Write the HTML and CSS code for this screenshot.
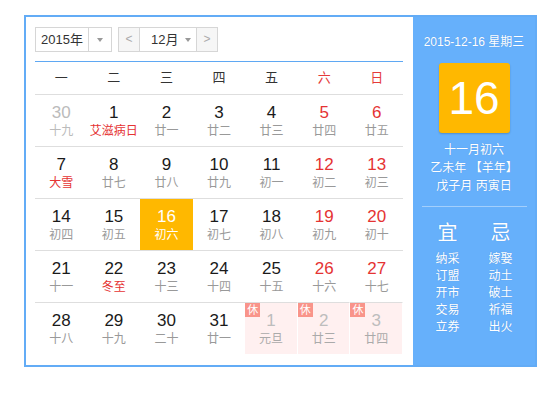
FILE: index.html
```html
<!DOCTYPE html>
<html lang="zh-CN">
<head>
<meta charset="utf-8">
<title>万年历</title>
<link rel="stylesheet" href="styles.css">
</head>
<body>
<div class="cal">
  <div class="main">
    <div class="toolbar">
      <div class="sel year">
        <span class="sel-text">2015年</span>
        <span class="sel-arrow"><i class="tri"></i></span>
      </div>
      <div class="sel month-group">
        <span class="nav">&lt;</span>
        <span class="sel-text month">12月<i class="tri"></i></span>
        <span class="nav">&gt;</span>
      </div>
    </div>
    <div class="week">
      <span>一</span><span>二</span><span>三</span><span>四</span><span>五</span><span class="red">六</span><span class="red">日</span>
    </div>
    <div class="days">
      <div class="d other"><b>30</b><em>十九</em></div>
      <div class="d fest"><b>1</b><em>艾滋病日</em></div>
      <div class="d"><b>2</b><em>廿一</em></div>
      <div class="d"><b>3</b><em>廿二</em></div>
      <div class="d"><b>4</b><em>廿三</em></div>
      <div class="d wk"><b>5</b><em>廿四</em></div>
      <div class="d wk"><b>6</b><em>廿五</em></div>

      <div class="d fest"><b>7</b><em>大雪</em></div>
      <div class="d"><b>8</b><em>廿七</em></div>
      <div class="d"><b>9</b><em>廿八</em></div>
      <div class="d"><b>10</b><em>廿九</em></div>
      <div class="d"><b>11</b><em>初一</em></div>
      <div class="d wk"><b>12</b><em>初二</em></div>
      <div class="d wk"><b>13</b><em>初三</em></div>

      <div class="d"><b>14</b><em>初四</em></div>
      <div class="d"><b>15</b><em>初五</em></div>
      <div class="d today"><b>16</b><em>初六</em></div>
      <div class="d"><b>17</b><em>初七</em></div>
      <div class="d"><b>18</b><em>初八</em></div>
      <div class="d wk"><b>19</b><em>初九</em></div>
      <div class="d wk"><b>20</b><em>初十</em></div>

      <div class="d"><b>21</b><em>十一</em></div>
      <div class="d fest"><b>22</b><em>冬至</em></div>
      <div class="d"><b>23</b><em>十三</em></div>
      <div class="d"><b>24</b><em>十四</em></div>
      <div class="d"><b>25</b><em>十五</em></div>
      <div class="d wk"><b>26</b><em>十六</em></div>
      <div class="d wk"><b>27</b><em>十七</em></div>

      <div class="d"><b>28</b><em>十八</em></div>
      <div class="d"><b>29</b><em>十九</em></div>
      <div class="d"><b>30</b><em>二十</em></div>
      <div class="d"><b>31</b><em>廿一</em></div>
      <div class="d hol"><span class="badge">休</span><b>1</b><em>元旦</em></div>
      <div class="d hol"><span class="badge">休</span><b>2</b><em>廿三</em></div>
      <div class="d hol"><span class="badge">休</span><b>3</b><em>廿四</em></div>
    </div>
  </div>
  <div class="side">
    <div class="date">2015-12-16 星期三</div>
    <div class="big">16</div>
    <div class="lunar">
      <div>十一月初六</div>
      <div>乙未年 【羊年】</div>
      <div>戊子月 丙寅日</div>
    </div>
    <div class="sep"></div>
    <div class="yiji">
      <div class="col">
        <div class="head">宜</div>
        <ul class="items"><li>纳采</li><li>订盟</li><li>开市</li><li>交易</li><li>立券</li></ul>
      </div>
      <div class="col">
        <div class="head">忌</div>
        <ul class="items"><li>嫁娶</li><li>动土</li><li>破土</li><li>祈福</li><li>出火</li></ul>
      </div>
    </div>
  </div>
</div>
</body>
</html>
```
FILE: styles.css
```css
body {
  margin: 0;
  background: #fff;
  font-family: "Liberation Sans", "Noto Sans CJK SC", sans-serif;
  color: #222;
}

.cal {
  display: flex;
  width: 509px;
  height: 348px;
  margin: 15px 0 0 24px;
  border: 2px solid #63acf6;
}

.main {
  width: 387px;
  box-sizing: border-box;
  padding: 10px 0 0 9px;
}

.toolbar {
  display: flex;
  gap: 6px;
  height: 25px;
}

.sel {
  display: flex;
  box-sizing: border-box;
  height: 25px;
  border: 1px solid #d6d6d6;
  font-size: 13px;
  line-height: 23px;
  color: #333;
}

.year {
  width: 77px;
}

.year .sel-text {
  width: 52px;
  text-align: center;
}

.sel-arrow {
  flex: 1;
  border-left: 1px solid #d6d6d6;
  display: flex;
  align-items: center;
  justify-content: center;
}

.tri {
  display: inline-block;
  width: 0;
  height: 0;
  border-left: 3.5px solid transparent;
  border-right: 3.5px solid transparent;
  border-top: 4px solid #999;
}

.month-group {
  width: 100px;
}

.nav {
  width: 20px;
  background: #f6f6f6;
  color: #aaa;
  text-align: center;
  font-size: 12px;
}

.month {
  width: 58px;
  box-sizing: border-box;
  border-left: 1px solid #d6d6d6;
  border-right: 1px solid #d6d6d6;
  display: flex;
  align-items: center;
  padding-left: 11px;
  gap: 7px;
}

.week {
  display: grid;
  grid-template-columns: repeat(7, 1fr);
  width: 368px;
  margin-top: 9px;
  border-top: 1px solid #5fa8f3;
  height: 32px;
  line-height: 32px;
  font-size: 13px;
  color: #333;
  text-align: center;
}

.week .red {
  color: #e53a3a;
}

.days {
  display: grid;
  grid-template-columns: repeat(7, 1fr);
  width: 368px;
}

.d {
  position: relative;
  height: 52px;
  box-sizing: border-box;
  border-top: 1px solid #dedede;
  padding-top: 8px;
  text-align: center;
}

.d b {
  display: block;
  font-weight: normal;
  font-size: 17px;
  line-height: 20px;
  color: #1a1a1a;
}

.d em {
  display: block;
  font-style: normal;
  font-size: 12px;
  line-height: 17px;
  color: #999;
}

.d.other b,
.d.other em {
  color: #bbb;
}

.d.wk b {
  color: #e53333;
}

.d.fest em {
  color: #e53333;
}

.d.today {
  background: #ffb800;
}

.d.today b,
.d.today em {
  color: #fff;
}

.d.hol {
  background: #fff0f0;
  border-right: 1px solid #fff;
}

.d.hol b {
  color: #bdbdbd;
}

.d.hol em {
  color: #aaa;
}

.badge {
  position: absolute;
  left: 0;
  top: 0;
  width: 15px;
  height: 14px;
  background: #f9948a;
  color: #fff;
  font-size: 11px;
  line-height: 14px;
  text-align: center;
}

.side {
  width: 122px;
  background: #66b0fb;
  color: #fff;
  display: flex;
  flex-direction: column;
  align-items: center;
  padding-top: 16px;
  box-sizing: border-box;
  text-shadow: 0 0 1px rgba(0, 60, 140, 0.25);
}

.date {
  font-size: 12px;
  line-height: 18px;
  white-space: nowrap;
}

.big {
  width: 71px;
  height: 70px;
  margin-top: 12px;
  background: #ffb800;
  border-radius: 3px;
  box-shadow: 0 1px 2px rgba(0, 0, 0, 0.2);
  font-size: 46px;
  line-height: 70px;
  text-align: center;
  text-shadow: none;
}

.lunar {
  margin-top: 8px;
  font-size: 12px;
  line-height: 18px;
  text-align: center;
}

.sep {
  width: 105px;
  height: 1px;
  margin-top: 11px;
  background: rgba(255, 255, 255, 0.4);
}

.yiji {
  display: flex;
  margin-top: 14px;
}

.col {
  width: 53px;
  text-align: center;
}

.head {
  font-size: 20px;
  line-height: 24px;
}

.items {
  list-style: none;
  margin: 6px 0 0;
  padding: 0;
  font-size: 12px;
  line-height: 17px;
}
```
